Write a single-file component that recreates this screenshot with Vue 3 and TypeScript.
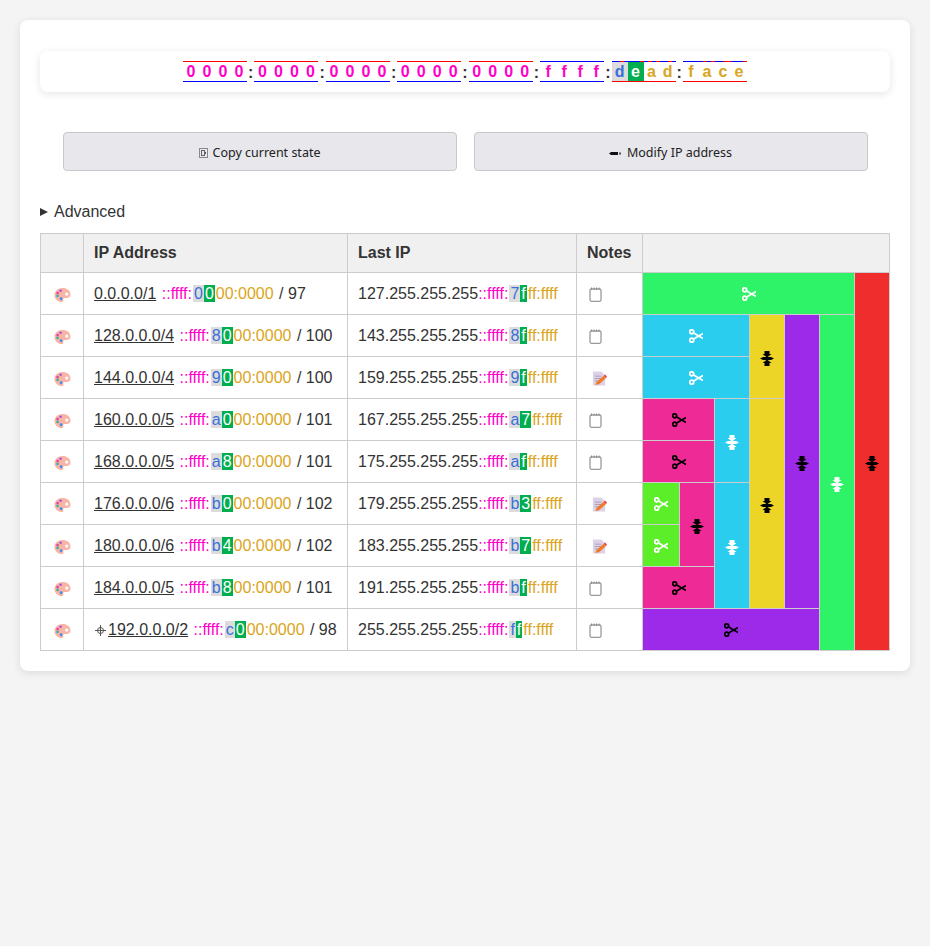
<script setup lang="ts">
interface Cell { colspan?: number; rowspan?: number; color: string; split: boolean; light: boolean }
interface Row {
  net: string; pre: boolean; nibA: string; nibB: string; restA: string; size: number;
  last: string; lastA: string; lastB: string; memo: boolean; cells: Cell[]
}
const GREEN = '#2ef267', RED = '#f02d2d', BLUE = '#2bcdef', YELLOW = '#edd528', PURPLE = '#9d2ae8', PINK = '#ee2a96', LIME = '#5cef29'
const c = (color: string, split: boolean, light: boolean, colspan = 1, rowspan = 1): Cell => ({ color, split, light, colspan, rowspan })
const rows: Row[] = [
  { net: '0.0.0.0/1', pre: false, nibA: '0', nibB: '0', restA: '00:0000', size: 97, last: '127.255.255.255', lastA: '7', lastB: 'f', memo: false,
    cells: [c(GREEN, true, true, 6), c(RED, false, false, 1, 9)] },
  { net: '128.0.0.0/4', pre: false, nibA: '8', nibB: '0', restA: '00:0000', size: 100, last: '143.255.255.255', lastA: '8', lastB: 'f', memo: false,
    cells: [c(BLUE, true, true, 3), c(YELLOW, false, false, 1, 2), c(PURPLE, false, false, 1, 7), c(GREEN, false, true, 1, 8)] },
  { net: '144.0.0.0/4', pre: false, nibA: '9', nibB: '0', restA: '00:0000', size: 100, last: '159.255.255.255', lastA: '9', lastB: 'f', memo: true,
    cells: [c(BLUE, true, true, 3)] },
  { net: '160.0.0.0/5', pre: false, nibA: 'a', nibB: '0', restA: '00:0000', size: 101, last: '167.255.255.255', lastA: 'a', lastB: '7', memo: false,
    cells: [c(PINK, true, false, 2), c(BLUE, false, true, 1, 2), c(YELLOW, false, false, 1, 5)] },
  { net: '168.0.0.0/5', pre: false, nibA: 'a', nibB: '8', restA: '00:0000', size: 101, last: '175.255.255.255', lastA: 'a', lastB: 'f', memo: false,
    cells: [c(PINK, true, false, 2)] },
  { net: '176.0.0.0/6', pre: false, nibA: 'b', nibB: '0', restA: '00:0000', size: 102, last: '179.255.255.255', lastA: 'b', lastB: '3', memo: true,
    cells: [c(LIME, true, true), c(PINK, false, false, 1, 2), c(BLUE, false, true, 1, 3)] },
  { net: '180.0.0.0/6', pre: false, nibA: 'b', nibB: '4', restA: '00:0000', size: 102, last: '183.255.255.255', lastA: 'b', lastB: '7', memo: true,
    cells: [c(LIME, true, true)] },
  { net: '184.0.0.0/5', pre: false, nibA: 'b', nibB: '8', restA: '00:0000', size: 101, last: '191.255.255.255', lastA: 'b', lastB: 'f', memo: false,
    cells: [c(PINK, true, false, 2)] },
  { net: '192.0.0.0/2', pre: true, nibA: 'c', nibB: '0', restA: '00:0000', size: 98, last: '255.255.255.255', lastA: 'f', lastB: 'f', memo: false,
    cells: [c(PURPLE, true, false, 5)] }
]

const groups = ['0000', '0000', '0000', '0000', '0000', 'ffff', 'dead', 'face']
const bits = (ch: string): boolean[] => {
  const v = parseInt(ch, 16)
  return [8, 4, 2, 1].map((m) => (v & m) !== 0)
}
const nibbleClass = (gi: number, ni: number): string => {
  if (gi < 6) return 'n-net'
  if (gi === 6 && ni === 0) return 'n-a'
  if (gi === 6 && ni === 1) return 'n-b'
  return 'n-host'
}
const treeCols = [37, 35, 35, 35, 35, 35, 35]
</script>

<template>
  <div class="card">
    <div class="addr">
      <template v-for="(g, gi) in groups" :key="gi">
        <span v-if="gi > 0" class="colon">:</span>
        <span class="group">
          <span v-for="(ch, ni) in g.split('')" :key="ni" class="nibble" :class="nibbleClass(gi, ni)">
            <span class="bits">
              <i v-for="(b, bi) in bits(ch)" :key="bi" :class="b ? 'on' : 'off'"></i>
            </span>
            <span class="ch">{{ ch }}</span>
            <span class="bits">
              <i v-for="n in 4" :key="n" :class="gi < 6 ? 'on' : 'off'"></i>
            </span>
          </span>
        </span>
      </template>
    </div>

    <div class="actions">
      <button type="button">
        <svg class="bi" width="9" height="10" viewBox="0 0 9 10">
          <rect x="0.500" y="0.500" width="8" height="9" fill="none" stroke="#8a8a8a" />
          <rect x="2.500" y="2.500" width="3" height="5" fill="none" stroke="#666" />
          <path d="M6.500 4v2" stroke="#555" />
        </svg>Copy current state
      </button>
      <button type="button">
        <svg class="bi wide" width="13" height="5" viewBox="0 0 13 5">
          <path d="M0 2.500 2 1h7v3H2z" fill="#111" />
          <rect x="10" y="1.500" width="2" height="2" fill="#555" />
        </svg>Modify IP address
      </button>
    </div>

    <details class="adv"><summary><span class="tri"></span>Advanced</summary></details>

    <table>
      <colgroup>
        <col class="c1" /><col class="c2" /><col class="c3" /><col class="c4" />
        <col v-for="(w, i) in treeCols" :key="i" :style="{ width: w + 'px' }" />
      </colgroup>
      <thead>
        <tr>
          <th></th><th>IP Address</th><th>Last IP</th><th>Notes</th><th colspan="7"></th>
        </tr>
      </thead>
      <tbody>
        <tr v-for="(r, i) in rows" :key="i">
          <td class="ic">
            <svg class="pal" width="17" height="16" viewBox="0 0 18 16">
              <path d="M9 .5C4.200.5.500 3.800.500 8c0 4 3.500 7.500 7.700 7.500 1.700 0 2-1 1.600-2.200-.3-1.200.3-2 1.500-2h2.200C16 11.300 17.500 9.700 17.500 7.500 17.500 3.300 13.800.5 9 .5z" fill="#f9b4a6" />
              <circle cx="13.500" cy="7" r="1.700" fill="#fff" />
              <circle cx="7" cy="3.500" r="1.400" fill="#a45ad8" />
              <circle cx="3.800" cy="6" r="1.400" fill="#e8409a" />
              <circle cx="3.800" cy="9" r="1.400" fill="#2fb5a8" />
              <circle cx="7.500" cy="12" r="1.500" fill="#3f8fe8" />
            </svg>
          </td>
          <td class="ip"><svg v-if="r.pre" class="mark" width="11" height="11" viewBox="0 0 11 11"><circle cx="5.500" cy="5.500" r="3" fill="none" stroke="#555" /><path d="M5.500 0v11M0 5.500h11" stroke="#555" /></svg><a>{{ r.net }}</a>&nbsp;<span class="mg">::ffff:</span><span class="ka">{{ r.nibA }}</span><span class="kb">{{ r.nibB }}</span><span class="gd tail">{{ r.restA }}</span> / {{ r.size }}</td>
          <td class="ip">{{ r.last }}<span class="mg">::ffff:</span><span class="ka">{{ r.lastA }}</span><span class="kb">{{ r.lastB }}</span><span class="gd">ff:ffff</span></td>
          <td class="nt">
            <svg v-if="!r.memo" class="pad" width="13" height="15" viewBox="0 0 13 15">
              <rect x="1" y="2" width="11" height="12.300" rx="1.500" fill="#fff" stroke="#9a9a9a" stroke-width="1.300" />
              <path d="M2.500 .5v2M5 .5v2M7.500 .5v2M10 .5v2" stroke="#888" stroke-width="1" />
            </svg>
            <svg v-else class="memo" width="15" height="17" viewBox="0 0 16 17">
              <path d="M1 1h9l4 4v11H1z" fill="#dcd2e8" />
              <path d="M3 6h7M3 8.500h7M3 11h4" stroke="#a89eb8" stroke-width="1" />
              <path d="M3.500 15.500 5 12l7.500-6.500 2.500 2.500-7.500 6.500z" fill="#f27a2a" />
              <path d="M12.500 5.500 14 4.200l2 2.300L15 8z" fill="#e8404a" />
            </svg>
          </td>
          <td
            v-for="(cell, j) in r.cells"
            :key="j"
            class="tree"
            :class="cell.light ? 'light' : 'dark'"
            :colspan="cell.colspan"
            :rowspan="cell.rowspan"
            :style="{ background: cell.color }"
          >
            <svg v-if="cell.split" width="14" height="14" viewBox="0 0 14 14">
              <circle cx="2.700" cy="2.800" r="2" fill="none" stroke="currentColor" stroke-width="1.800" />
              <circle cx="2.700" cy="11.200" r="2" fill="none" stroke="currentColor" stroke-width="1.800" />
              <path d="M4.200 3.800 14 9.400M4.200 10.200 14 4.600" stroke="currentColor" stroke-width="1.700" fill="none" />
            </svg>
            <svg v-else class="merge" width="14" height="15" viewBox="0 0 14 15">
              <path d="M4.500 0h5v3h2L7 6.500 2.500 3h2zM4.500 15h5v-3h2L7 8.500 2.500 12h2z" fill="currentColor" />
              <path d="M0 7.500 3 6h8l3 1.500L11 9H3z" fill="currentColor" />
            </svg>
          </td>
        </tr>
      </tbody>
    </table>
  </div>
</template>

<style>
html, body { background: #f4f4f4; }
body { min-height: 946px; }
</style>

<style scoped>
.card {
  margin: 20px;
  padding: 31px 20px 20px;
  background: #fff;
  border-radius: 8px;
  box-shadow: 0 2px 8px rgba(0, 0, 0, 0.1);
  font-family: "Liberation Sans", Arial, sans-serif;
  font-size: 16px;
  color: #333;
}
.addr {
  display: flex;
  justify-content: center;
  align-items: flex-start;
  padding: 10px;
  height: 41px;
  box-sizing: border-box;
  background: #fff;
  border-radius: 8px;
  box-shadow: 0 2px 8px rgba(0, 0, 0, 0.1);
  font-weight: 700;
}
.group { display: flex; }
.colon { width: 7.43px; text-align: center; margin-top: 3px; line-height: 18px; color: #333; }
.nibble { display: flex; flex-direction: column; width: 16px; }
.bits { display: flex; height: 1px; }
.bits i { width: 4px; height: 1px; }
.on { background: #0000ff; }
.off { background: #ff0000; }
.ch { height: 19px; line-height: 19px; text-align: center; }
.n-net { color: #ff00c8; }
.n-a { color: #3a6fd8; background: #dcdcdc; }
.n-b { color: #fff; background: #00ae50; }
.n-host { color: #daa520; }

.actions { display: flex; justify-content: center; gap: 17px; margin-top: 40px; }
button {
  width: 394px;
  height: 39px;
  background: #e7e7ec;
  border: 1px solid #c8c8c8;
  border-radius: 4px;
  font-family: "Noto Sans", sans-serif;
  font-size: 12.5px;
  color: #222;
  padding: 2px 0 0;
}
.bi { margin-right: 5px; vertical-align: -1px; }
.bi.wide { vertical-align: 1px; }
.adv { margin-top: 32px; }
.adv summary { line-height: 18px; height: 18px; list-style: none; display: flex; align-items: center; }
.adv summary::-webkit-details-marker { display: none; }
.tri {
  width: 0;
  height: 0;
  margin-right: 6px;
  border-left: 8px solid #333;
  border-top: 4px solid transparent;
  border-bottom: 4px solid transparent;
}

table {
  margin-top: 12px;
  width: 850px;
  table-layout: fixed;
  border-collapse: collapse;
}
.c1 { width: 43px; }
.c2 { width: 264px; }
.c3 { width: 229px; }
.c4 { width: 66px; }
th, td { border: 1px solid #ccc; }
th {
  height: 39px;
  padding: 0 10px;
  background: #f0f0f0;
  text-align: left;
  font-weight: 700;
  box-sizing: border-box;
}
td { height: 42px; box-sizing: border-box; padding: 0; }
.ip { padding: 0 10px; white-space: nowrap; }
.ic { text-align: center; line-height: 0; }
.ic svg { vertical-align: middle; }
.pal { margin-top: 2px; }
.nt { line-height: 0; padding-left: 10px; }
.nt svg { vertical-align: middle; }
.pad { margin: 1px 0 0 2px; }
.memo { margin: 1px 0 0 5px; }
.ip a { text-decoration: underline; padding-right: 1px; }
.mark { margin: 0 2px 0 1px; vertical-align: -1px; }
.mg { color: #ff00c8; padding-right: 1px; }
.gd { color: #daa520; padding-left: 1px; }
.tail { padding-right: 1px; }
.ka { color: #3a6fd8; background: #dcdcdc; padding: 0 1px; }
.kb { color: #fff; background: #00ae50; padding: 0 1px; }
.tree { text-align: center; line-height: 0; }
.tree svg { vertical-align: middle; }
.merge { margin: 4px 0 0 0; }
.light { color: #fff; }
.dark { color: #000; }
</style>
